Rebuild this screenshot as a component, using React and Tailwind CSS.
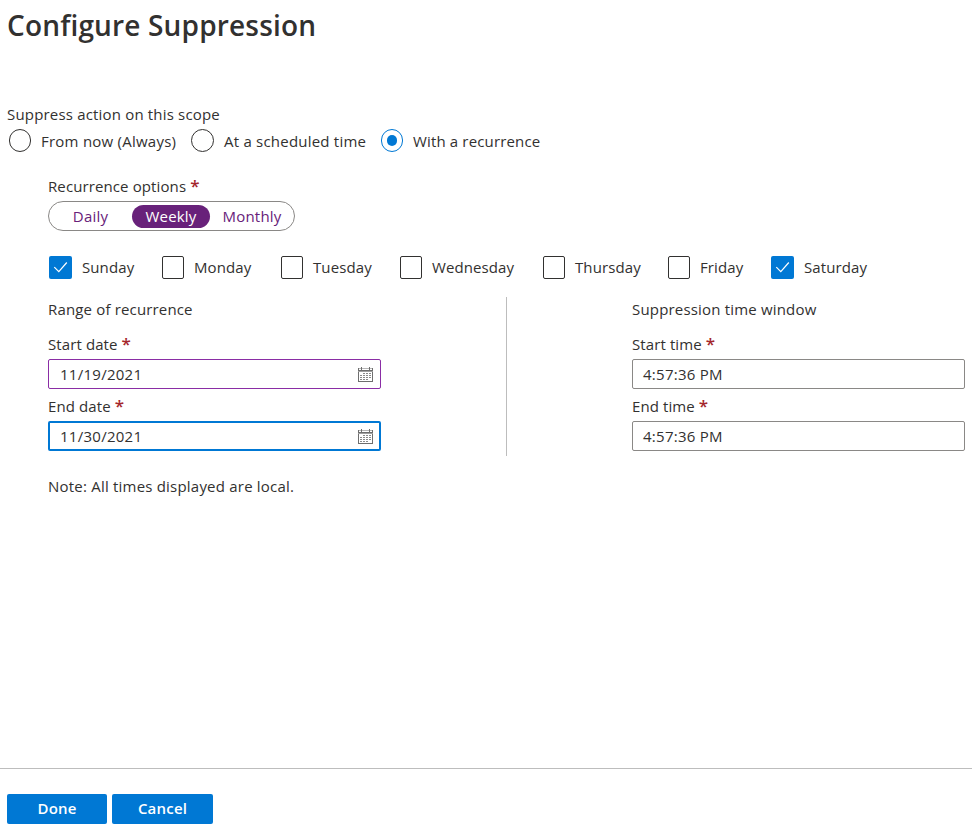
const radios = [
  { label: 'From now (Always)', width: 'w-[182px]', ring: 'w-[22px]', tracking: 'tracking-[0.24px]' },
  { label: 'At a scheduled time', width: 'w-[190px]', ring: 'w-[23px]', tracking: 'tracking-[0.22px]' },
  { label: 'With a recurrence', width: 'w-[170px]', ring: 'w-[22px]', tracking: 'tracking-[0.15px]', selected: true },
];

const days = [
  { label: 'Sunday', width: 'w-[113px]', checked: true },
  { label: 'Monday', width: 'w-[119px]' },
  { label: 'Tuesday', width: 'w-[119px]' },
  { label: 'Wednesday', width: 'w-[143px]' },
  { label: 'Thursday', width: 'w-[125px]' },
  { label: 'Friday', width: 'w-[103px]' },
  { label: 'Saturday', width: 'w-[110px]', checked: true },
];

function Radio({ label, width, ring, tracking, selected }) {
  return (
    <label className={`flex shrink-0 items-center gap-[10px] ${width}`}>
      <span
        className={`flex h-[23px] ${ring} items-center justify-center rounded-full border ${
          selected ? 'border-[#0078d4]' : 'border-[#323130]'
        }`}
      >
        {selected && <span className="h-[11px] w-[10px] rounded-full bg-[#0078d4]" />}
      </span>
      <span className={`whitespace-nowrap ${tracking}`}>{label}</span>
    </label>
  );
}

function Day({ label, width, checked }) {
  return (
    <label className={`flex shrink-0 items-start gap-[10px] ${width}`}>
      {checked ? (
        <span className="flex size-[23px] items-center justify-center rounded-[2px] bg-[#0078d4]">
          <svg width="23" height="23" viewBox="0 0 23 23" fill="none" stroke="white" strokeWidth="1.2">
            <path d="M5.3 11.2 L9.8 15.7 L17.8 6.5" />
          </svg>
        </span>
      ) : (
        <span className="h-[23px] w-[22px] rounded-[2px] border border-[#323130]" />
      )}
      <span className="pt-px tracking-[0.1px] whitespace-nowrap">{label}</span>
    </label>
  );
}

function CalendarIcon() {
  return (
    <svg width="15" height="15" viewBox="0 0 15 15" shapeRendering="crispEdges" fill="none">
      <path d="M0 1.5H15" stroke="#b5b5b5" />
      <path d="M0 3.5H15M3.5 0V3M11.5 0V3" stroke="#6e6e6e" />
      <path d="M0.5 1V14.5H14.5V1" stroke="#6e6e6e" />
      <path d="M0 4.5H15" stroke="#a0a0a0" />
      <path d="M5 6.5H13M2 8.5H13M2 10.5H13M2 12.5H10" stroke="#8a8a8a" strokeDasharray="2 1" />
    </svg>
  );
}

function Field({ label, value, border, calendar }) {
  return (
    <div className="h-[62px]">
      <div className="flex h-[28px] gap-[4px] pt-[3px] tracking-[0.1px]">
        {label}
        <Star />
      </div>
      <div className={`flex h-[30px] items-center justify-between rounded-[2px] tracking-[0.27px] ${border}`}>
        <span>{value}</span>
        {calendar && <CalendarIcon />}
      </div>
    </div>
  );
}

function Star() {
  return <span className="text-[17px] leading-5 font-semibold tracking-normal text-[#a4262c]">*</span>;
}

export default function App() {
  return (
    <div className="flex h-[831px] w-[972px] flex-col overflow-hidden bg-white font-['Open_Sans','Noto_Sans',sans-serif] text-[15px] leading-5 text-[#323130]">
      <h1 className="h-[104px] pt-[5px] pl-[7px] text-[28px] leading-10 font-semibold tracking-[0.17px] whitespace-nowrap">
        Configure Suppression
      </h1>
      <div className="h-[25px] pl-[7px] tracking-[0.18px]">Suppress action on this scope</div>
      <div className="flex h-[23px] pl-[9px]">
        {radios.map((r) => (
          <Radio key={r.label} {...r} />
        ))}
      </div>
      <div className="pt-[24px] pl-[48px]">
        <div className="flex h-[25px] gap-[4px] tracking-[0.11px]">
          Recurrence options
          <Star />
        </div>
        <div className="flex h-[30px] w-[247px] items-center rounded-full border border-[#8a8886] tracking-[0.2px] text-[#68217a]">
          <span className="w-[83px] text-center">Daily</span>
          <span className="h-[23px] w-[78px] rounded-full bg-[#68217a] text-center leading-[23px] text-white">Weekly</span>
          <span className="w-[84px] text-center">Monthly</span>
        </div>
      </div>
      <div className="mt-[25px] flex h-[23px] pl-[49px]">
        {days.map((d) => (
          <Day key={d.label} {...d} />
        ))}
      </div>
      <div className="mt-[18px] flex h-[159px] pl-[48px]">
        <section className="w-[333px]">
          <div className="h-[34px] pt-[2px] tracking-[0.16px]">Range of recurrence</div>
          <Field label="Start date" value="11/19/2021" border="border border-[#8a2da5] pl-[11px] pr-[7px]" calendar />
          <Field label="End date" value="11/30/2021" border="border-2 border-[#0078d4] pl-[10px] pr-[6px]" calendar />
        </section>
        <div className="mx-[125px] w-px bg-[#bdbdbd]" />
        <section className="w-[333px]">
          <div className="h-[34px] pt-[2px] tracking-[0.18px]">Suppression time window</div>
          <Field label="Start time" value="4:57:36 PM" border="border border-[#8a8886] pl-[10px]" />
          <Field label="End time" value="4:57:36 PM" border="border border-[#8a8886] pl-[10px]" />
        </section>
      </div>
      <div className="mt-[20px] pl-[48px] tracking-[0.21px]">Note: All times displayed are local.</div>
      <footer className="mt-auto flex h-[63px] gap-[5px] border-t border-[#bdbdbd] pt-[25px] pl-[7px] font-semibold tracking-[0.2px] text-white">
        <button className="h-[30px] w-[100px] rounded-[2px] bg-[#0078d4] pb-[2px]">Done</button>
        <button className="h-[30px] w-[101px] rounded-[2px] bg-[#0078d4] pb-[2px]">Cancel</button>
      </footer>
    </div>
  );
}
